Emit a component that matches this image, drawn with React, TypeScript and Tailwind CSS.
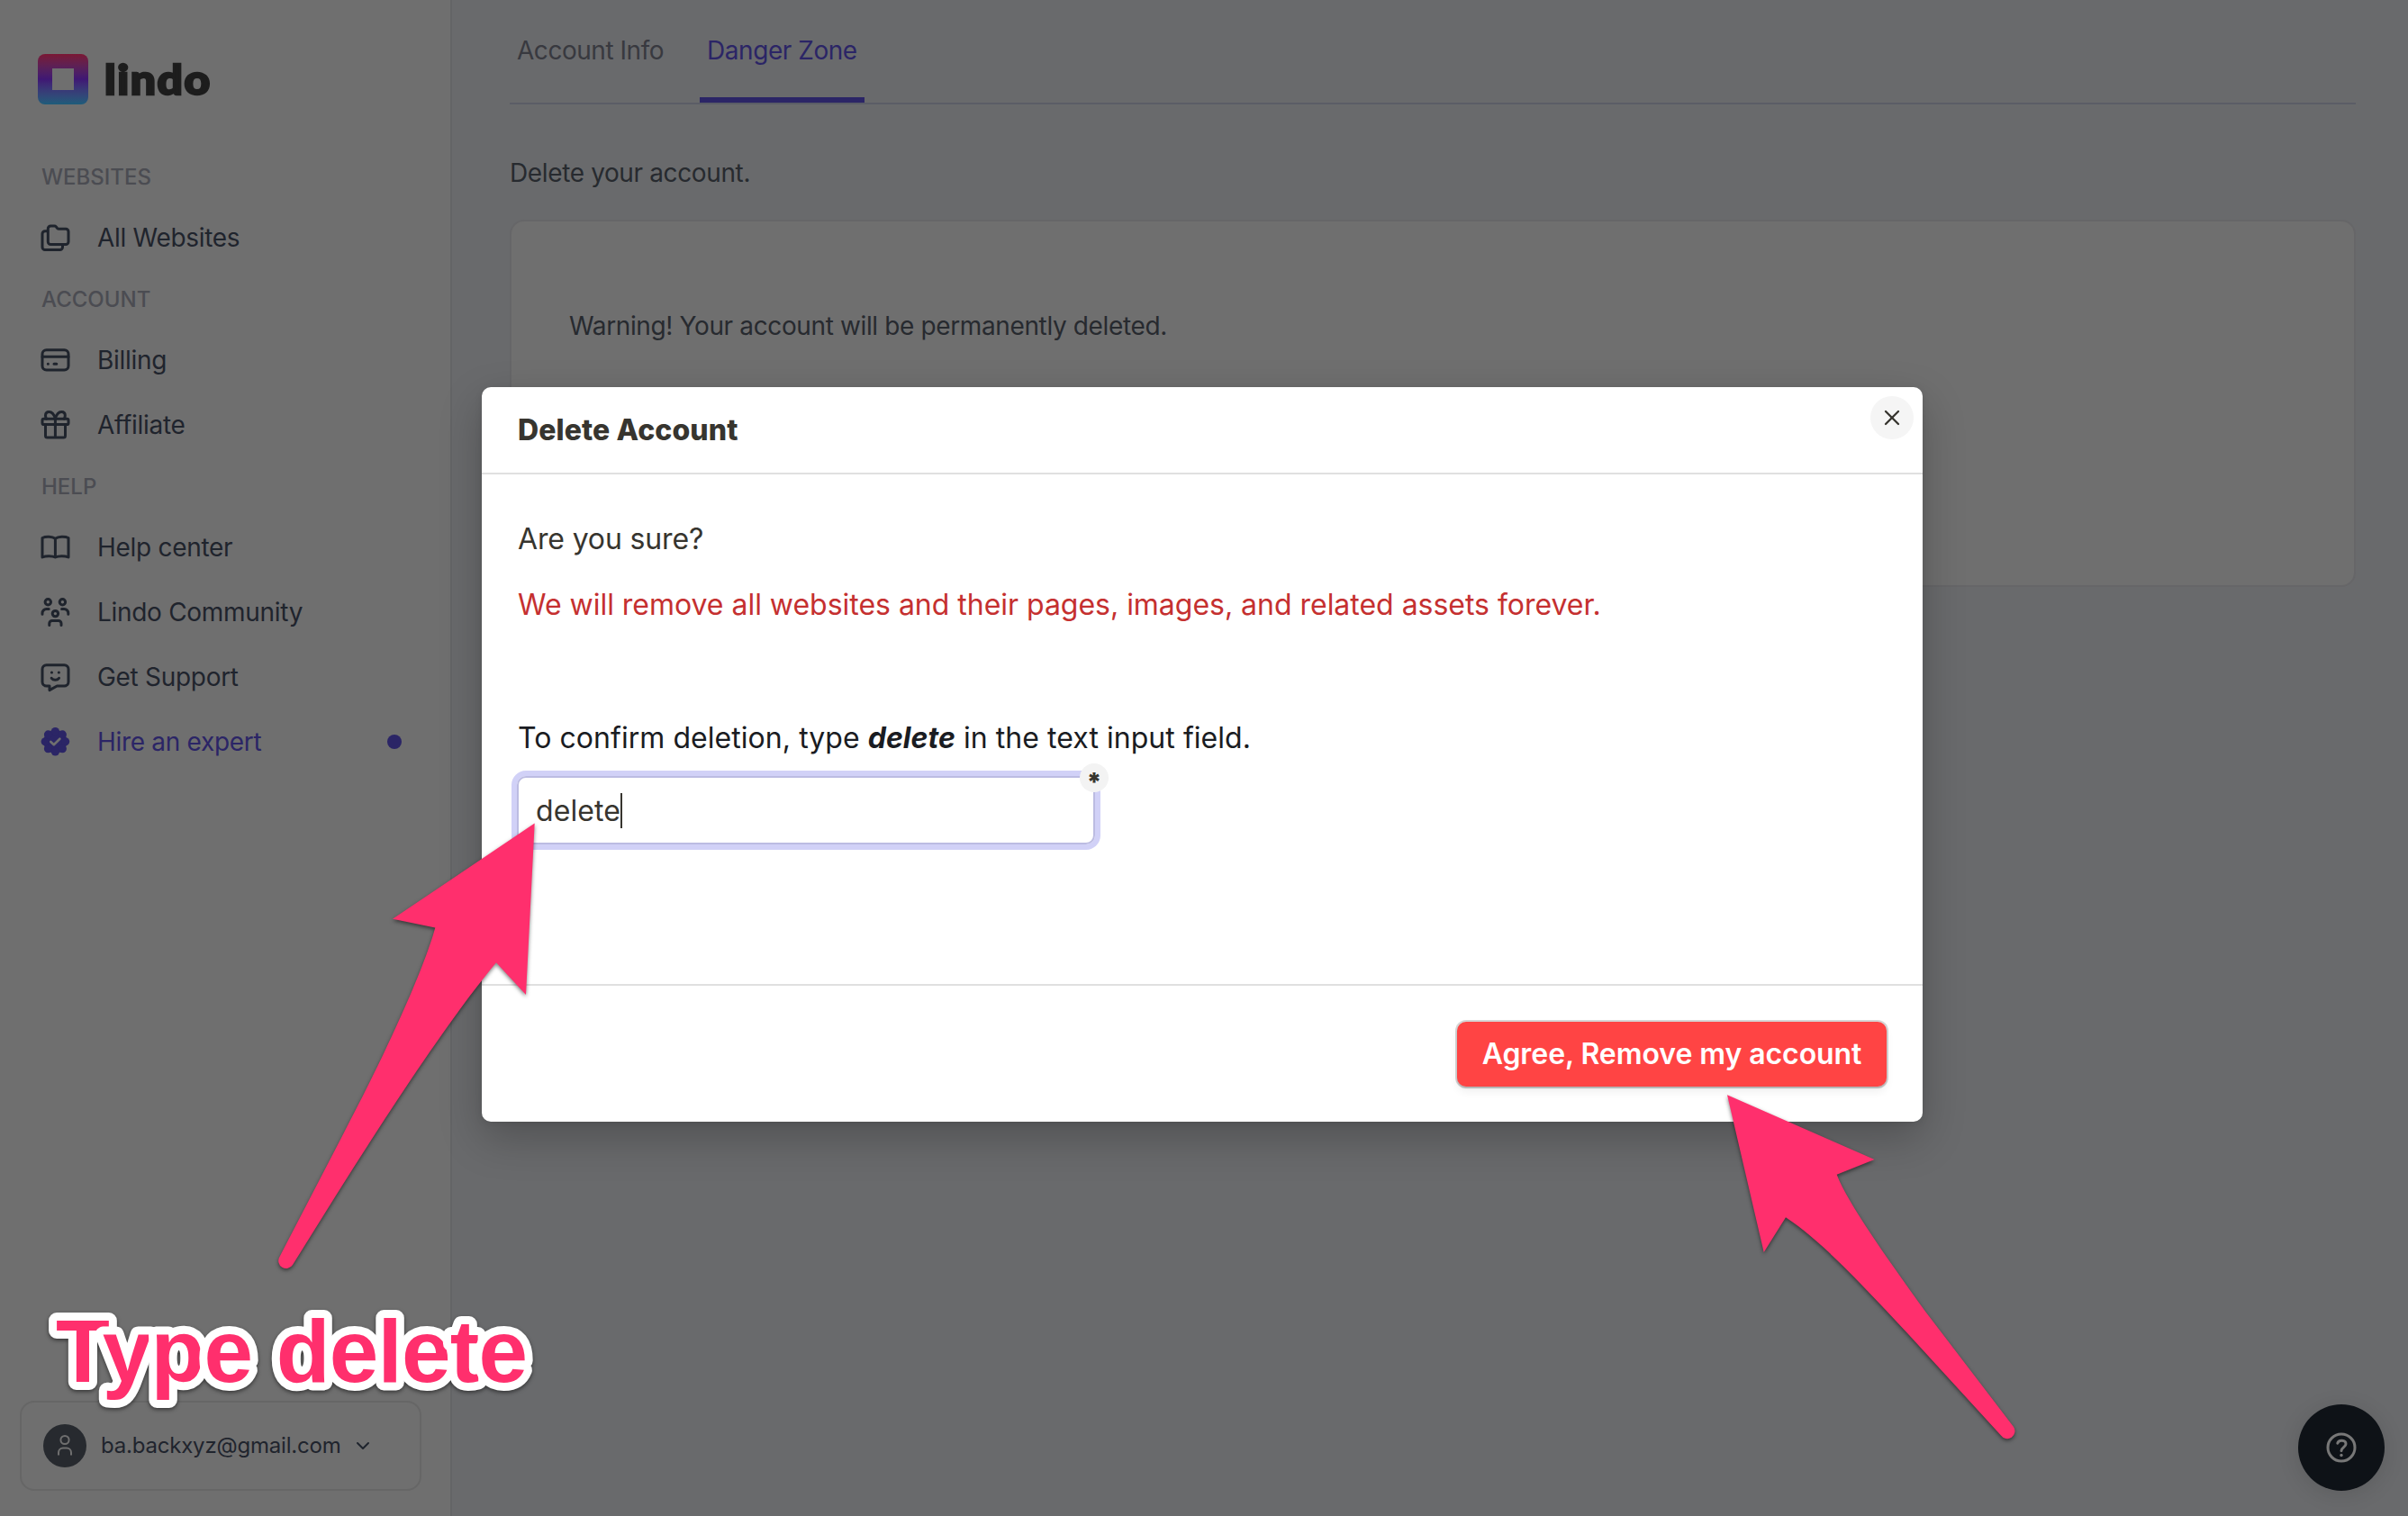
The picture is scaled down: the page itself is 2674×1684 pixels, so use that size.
import type { ReactNode } from "react";
import { ChevronDown, X } from "lucide-react";

function NavIcon({ children }: { children: ReactNode }) {
  return (
    <svg
      viewBox="0 0 36 36"
      className="size-9 shrink-0"
      fill="none"
      stroke="currentColor"
      strokeWidth="3"
      strokeLinecap="round"
      strokeLinejoin="round"
    >
      {children}
    </svg>
  );
}

const badgeBumps = [0, 45, 90, 135, 180, 225, 270, 315];

const sections = [
  {
    title: "WEBSITES",
    items: [
      {
        label: "All Websites",
        icon: (
          <>
            <path d="M12.3 5h4q1.3 0 2 .9l1.3 1.6q.7.8 1.8.8H29a3 3 0 0 1 3 3v11.2a3 3 0 0 1-3 3H12.3a3 3 0 0 1-3-3V8a3 3 0 0 1 3-3z" />
            <path d="M8.5 10.7H6a3 3 0 0 0-3 3v14.8a3 3 0 0 0 3 3h16.5a3 3 0 0 0 3-3v-2" />
          </>
        ),
      },
    ],
  },
  {
    title: "ACCOUNT",
    items: [
      {
        label: "Billing",
        icon: (
          <>
            <rect x="3" y="6.7" width="29" height="22.3" rx="4.5" />
            <path d="M3 14.3h29M9.3 22.3h.1M16 22.3h2.8" />
          </>
        ),
      },
      {
        label: "Affiliate",
        icon: (
          <>
            <rect x="3" y="11.3" width="29" height="6.3" rx="1.6" />
            <path d="M6.5 17.7v12.4a2 2 0 0 0 2 2h18a2 2 0 0 0 2-2V17.7M17.4 11.3v20.8" />
            <path d="M17.4 11.3C16 6 13.2 3.6 10.5 3.6c-3 0-4 2-4 4 0 1.6.4 2.8 1 3.6M17.4 11.3c1.4-5.3 4.2-7.7 6.9-7.7 3 0 4 2 4 4 0 1.6-.4 2.8-1 3.6" />
          </>
        ),
      },
    ],
  },
  {
    title: "HELP",
    items: [
      {
        label: "Help center",
        icon: (
          <path d="M17.4 8.2C14 6 7 5.7 3 7.5V29c4-1.8 11-1.8 14.4 0 3.4-1.8 10.6-1.8 14.6 0V7.5c-4-1.8-11.2-1.5-14.6.7V29" />
        ),
      },
      {
        label: "Lindo Community",
        icon: (
          <>
            <circle cx="9.3" cy="6.7" r="3.2" />
            <circle cx="25.4" cy="6.7" r="3.2" />
            <circle cx="17.4" cy="19.6" r="3.2" />
            <path d="M3 20.2v-1a4.6 4.6 0 0 1 4.6-4.7h2.6M31.8 20.2v-1a4.6 4.6 0 0 0-4.6-4.7h-2.6M10.8 32.5v-2a3 3 0 0 1 3-3H21a3 3 0 0 1 3 3v2" />
          </>
        ),
      },
      {
        label: "Get Support",
        icon: (
          <>
            <path d="M7.5 4.7h20A4.5 4.5 0 0 1 32 9.2v14.3a4.5 4.5 0 0 1-4.5 4.5h-8.2L11 32.6V28H7.5A4.5 4.5 0 0 1 3 23.5V9.2a4.5 4.5 0 0 1 4.5-4.5z" />
            <path d="M13.4 13h.1M21.3 13h.1M13.2 19.3c2 2.7 6.3 2.7 8.3 0" />
          </>
        ),
      },
      {
        label: "Hire an expert",
        active: true,
        icon: (
          <>
            <g fill="currentColor" stroke="none">
              <circle cx="17.4" cy="17.8" r="13" />
              {badgeBumps.map((angle) => (
                <circle key={angle} cx="17.4" cy="6.6" r="4.6" transform={`rotate(${angle} 17.4 17.8)`} />
              ))}
            </g>
            <path d="M12.3 18l3.5 3.2 6.6-6.5" stroke="#6f6f6f" strokeWidth="2.6" />
          </>
        ),
      },
    ],
  },
];

function Sidebar() {
  return (
    <aside className="flex h-full w-[502px] shrink-0 flex-col border-r-2 border-[#636466] bg-[#6f6f6f]">
      <div className="flex h-[164px] items-start gap-[18px] pl-[42px] pt-[60px]">
        <div className="flex size-14 items-center justify-center rounded-lg bg-linear-to-b from-[#7a1734] via-[#3f1674] to-[#1c5c7a]">
          <div className="size-6 bg-[#6f6f6f]" />
        </div>
        <span className="origin-left scale-x-108 font-['Lato',sans-serif] text-[46px] font-black leading-[55px] tracking-[1.5px] text-[#1d1d1d] [-webkit-text-stroke:2.5px_#1d1d1d]">
          lindo
        </span>
      </div>

      <nav className="flex-1">
        {sections.map((section) => (
          <div key={section.title}>
            <h3 className="flex h-16 items-center pl-[46px] pt-0.5 text-[24px] font-medium text-[#4b4c52]">
              {section.title}
            </h3>
            {section.items.map((item) => (
              <a
                key={item.label}
                className={`flex h-[72px] items-center gap-7 pl-11 pr-[54px] text-[28px] tracking-[-0.3px] ${
                  "active" in item ? "text-[#2b2566]" : "text-[#1f242d]"
                }`}
              >
                <NavIcon>{item.icon}</NavIcon>
                <span>{item.label}</span>
                {"active" in item && <span className="ml-auto size-4 rounded-full bg-[#2b2566]" />}
              </a>
            ))}
          </div>
        ))}
      </nav>

      <div className="mb-7 ml-[22px] flex h-[100px] w-[446px] items-center rounded-2xl border-2 border-[#666666] pl-6">
        <div className="flex size-12 items-center justify-center rounded-full bg-[#272a2f] text-[#6f6f6f]">
          <svg viewBox="0 0 24 32" className="h-8 w-6" fill="none" stroke="currentColor" strokeWidth="2">
            <circle cx="12" cy="9.5" r="4.6" />
            <path d="M5 26.5v-3a5 5 0 0 1 5-5h4a5 5 0 0 1 5 5v3" />
          </svg>
        </div>
        <span className="ml-4 text-[24px] tracking-[-0.2px] text-[#1f242d]">ba.backxyz@gmail.com</span>
        <ChevronDown className="ml-3 size-6 text-[#1f242d]" strokeWidth={2} />
      </div>
    </aside>
  );
}

function AccountPage() {
  return (
    <main className="flex-1 bg-[#696a6c] pl-16 pr-[58px] text-[28px] leading-10 tracking-[-0.37px]">
      <div className="flex h-[116px] border-b-2 border-[#5b5d66] tracking-[-0.46px]">
        <a className="px-2 pt-9 text-[#38393f]">Account Info</a>
        <a className="ml-8 border-b-[6px] border-[#2b2566] px-2 pt-9 text-[#2b2566]">Danger Zone</a>
      </div>
      <p className="mt-14 text-[#272a2f]">Delete your account.</p>
      <section className="mt-8 h-[408px] rounded-2xl border-2 border-[#666668] bg-[#6f6f6f] px-16 pt-24">
        <p className="text-[#272a2f]">Warning! Your account will be permanently deleted.</p>
      </section>
    </main>
  );
}

function DeleteModal() {
  return (
    <div className="absolute left-[535px] top-[430px] flex h-[816px] w-[1600px] flex-col rounded-[10px] bg-white text-[32px] text-[#37352f] shadow-[0_18px_48px_rgba(0,0,0,0.23),0_2px_8px_rgba(0,0,0,0.08)]">
      <header className="flex h-[97px] items-start justify-between border-b-2 border-[#e0e0e0] pl-10 pr-[10px] pt-[10px]">
        <h2 className="pt-[18px] font-extrabold leading-10 tracking-[0.1px]">Delete Account</h2>
        <button className="flex size-12 items-center justify-center rounded-full bg-[#f5f5f5]">
          <X className="size-7" strokeWidth={2} />
        </button>
      </header>

      <div className="flex-1 pl-10 pt-[52px]">
        <p className="leading-10 tracking-[-0.15px]">Are you sure?</p>
        <p className="mt-[33px] leading-10 tracking-[-0.02px] text-[#c53030]">
          We will remove all websites and their pages, images, and related assets forever.
        </p>
        <p className="mt-[108px] leading-10 tracking-[0.05px] text-[#1a1c22]">
          To confirm deletion, type <strong className="font-bold italic">delete</strong> in the text input field.
        </p>
        <div className="relative -ml-px mt-[22px] flex h-[76px] w-[642px] items-center rounded-[10px] border-2 border-[#bcbce2] pl-[19px] shadow-[0_0_0_6px_#d1d1f7]">
          <span className="pt-0.5 tracking-[0.1px]">delete</span>
          <span className="h-[39px] w-[2px] bg-[#37352f]" />
          <span className="absolute -right-[17px] -top-4 flex size-8 items-center justify-center rounded-full bg-[#f3f3f3]">
            <span className="h-6 text-[28px] font-black leading-[34px]">*</span>
          </span>
        </div>
      </div>

      <footer className="flex h-[153px] justify-end border-t-2 border-[#e0e0e0] pr-10 pt-10">
        <button className="h-[72px] w-[477px] rounded-[10px] bg-[#ff4444] font-semibold tracking-[-0.07px] text-white shadow-[0_0_0_2px_rgba(0,0,0,0.16),0_2px_2px_rgba(0,0,0,0.12),0_6px_10px_rgba(0,0,0,0.06)]">
          Agree, Remove my account
        </button>
      </footer>
    </div>
  );
}

function Annotations() {
  return (
    <svg
      viewBox="0 0 2674 1684"
      className="absolute inset-0 h-full w-full drop-shadow-[0_2px_2px_rgba(0,0,0,0.5)]"
      fill="#ff2f6d"
    >
      <path d="M593.7 914.6L436 1020.7l47.3 9.7C470 1078 430 1167 380 1262L310.5 1396A8 8 0 0 0 325 1405L373 1328C436 1228 502 1128 551 1069.3L584 1105z" />
      <path d="M1918 1216.3L2081.5 1288l-41.8 16.7C2052 1337 2096 1398 2138 1456.7L2236 1585A8 8 0 0 1 2222 1594.5L2120 1483C2065 1424 2022 1378 1983 1352.3L1958.7 1391z" />
      <text
        x="62"
        y="1535"
        textLength="524"
        fontFamily="Liberation Sans, sans-serif"
        fontSize="98"
        fontWeight="700"
        stroke="#ffffff"
        strokeWidth="18"
        strokeLinejoin="round"
        paintOrder="stroke"
      >
        Type delete
      </text>
    </svg>
  );
}

export default function App() {
  return (
    <div className="relative flex h-[1684px] w-[2674px] overflow-hidden font-[Inter,sans-serif]">
      <Sidebar />
      <AccountPage />

      <button className="absolute bottom-7 right-[26px] flex size-24 items-center justify-center rounded-full bg-[#0e1217] text-[#777777] shadow-[0_4px_24px_rgba(0,0,0,0.12)]">
        <svg viewBox="0 0 36 36" className="size-9" fill="none" stroke="currentColor" strokeWidth="3">
          <circle cx="18" cy="18" r="15" />
          <path d="M13.8 13.2c1-4 9.2-4 9.2.8 0 3.6-5 3.7-5 7.6" strokeLinecap="round" />
          <circle cx="18" cy="26.5" r="1.7" fill="currentColor" stroke="none" />
        </svg>
      </button>

      <DeleteModal />
      <Annotations />
    </div>
  );
}
